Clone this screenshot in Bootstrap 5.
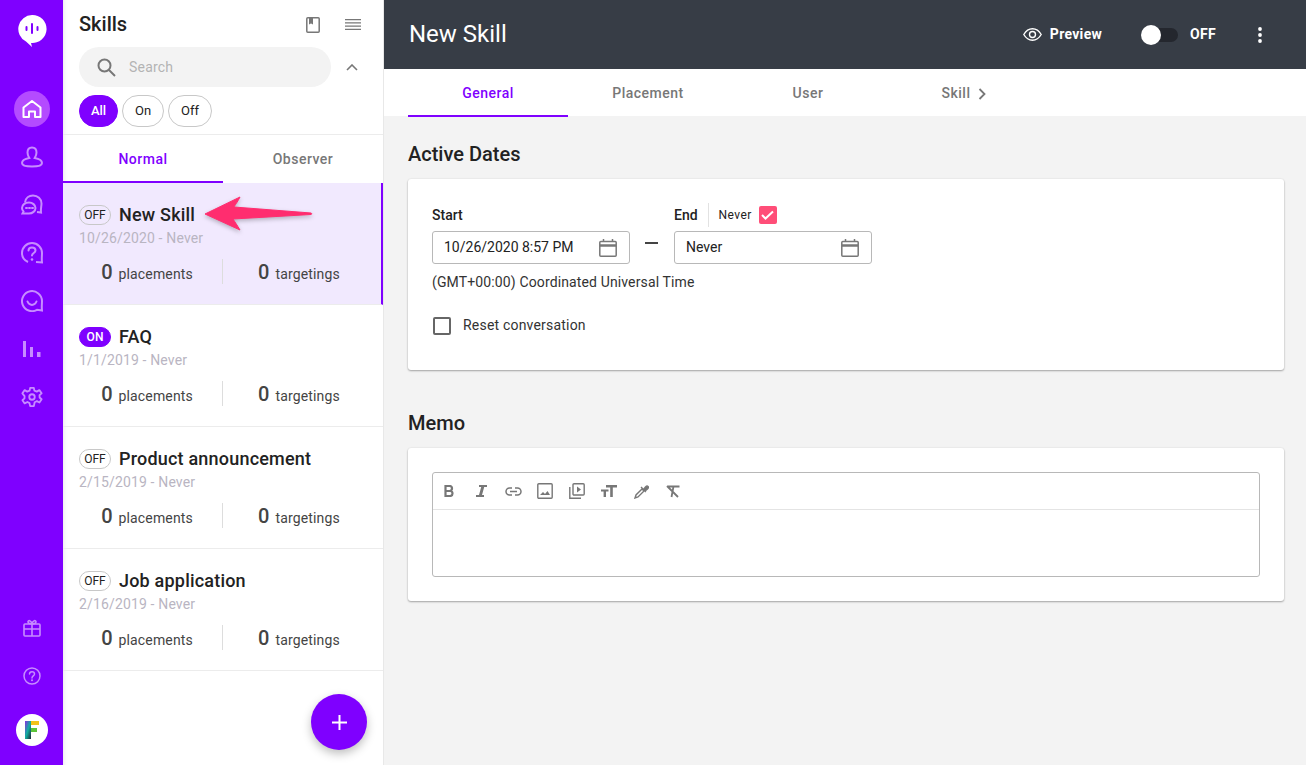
<!DOCTYPE html>
<html lang="en">
<head>
<meta charset="utf-8">
<title>Skills</title>
<link rel="stylesheet" href="https://cdn.jsdelivr.net/npm/bootstrap@5.3.0/dist/css/bootstrap.min.css">
<style>
html,body{height:100%;overflow:hidden}
body{font-family:Roboto,"Liberation Sans",sans-serif;color:#222;background:#f3f3f3;font-size:14px}
.app-shell{height:765px;width:1306px}
.rail{width:63px;background:#7f00ff;flex:none}
.rail-logo{height:32px;margin:14px 0 39px}
.rail-item{height:48px;color:#c78cff}
.rail-active{width:36px;height:36px;border-radius:50%;background:#b44bff;color:#fff}
.rail-foot{padding-bottom:19px}
.rail-avatar{width:32px;height:32px;border-radius:50%;background:#fff;margin-top:14px}
.panel{width:321px;flex:none;background:#fff;border-right:1px solid #e8e8e8;box-shadow:inset 5px 0 5px -5px rgba(0,0,0,.12)}
.panel-head{height:47px;padding:0 10px 0 16px}
.panel-title{font-size:20px;font-weight:500;line-height:54px;margin:0;color:#222}
.tool-btn{color:#777;width:40px;margin-top:3px}
.search-row{padding-left:16px;height:40px}
.search-pill{width:252px;height:40px;border-radius:20px;background:#f3f3f3;padding-left:18px;color:#b3b3b3}
.search-pill span{margin-left:13px;letter-spacing:.2px}
.chevron-up{margin-left:15px}
.chips{padding:8px 0 7px 16px;border-bottom:1px solid #ececec;gap:4px}
.chip{height:32px;border:1px solid #c8c8c8;border-radius:16px;font-size:13px;background:#fff;color:#222;line-height:30px;text-align:center}
.chip-all{width:39px}
.chip-mid{width:42px}
.chip-off{width:44px}
.chip-on{background:#7f00ff;border-color:#7f00ff;color:#fff;font-weight:500}
.tab-cell{height:48px;font-size:14px;font-weight:500;color:#777;letter-spacing:.5px;border-bottom:2px solid transparent;padding-top:3px}
.tab-on{color:#7f00ff;border-bottom-color:#7f00ff}
.tab-half{width:160px}
.skill{height:122px;border-bottom:1px solid #ececec;padding:20px 16px 0 16px}
.skill-sel{background:#f1e9fe;border-right:2px solid #7f00ff}
.state{font-size:12px;height:20px;line-height:18px;border-radius:10px;border:1px solid #c8c8c8;width:32px;text-align:center;color:#222;margin-right:8px}
.state-on{background:#7f00ff;border-color:#7f00ff;color:#fff;font-weight:500}
.skill-name{font-size:18px;font-weight:500;line-height:24px;color:#222;letter-spacing:.2px}
.skill-date{font-size:14px;color:#b9b5c2;line-height:20px;margin-top:1px;letter-spacing:.15px}
.stats{margin:11px 0 0 -16px;width:319px}
.stat{width:159px;height:25px;line-height:27px;color:#444;font-size:14px;letter-spacing:.15px;text-align:center}
.stat b{font-size:20px;font-weight:500;margin-right:6px;letter-spacing:0}
.stat-left{padding-left:9px}
.stat-right{width:160px;padding-right:7px;border-left:1px solid #ddd}
.fab{width:56px;height:56px;border-radius:50%;background:#7f00ff;color:#fff;border:0;position:absolute;right:16px;bottom:15px;box-shadow:0 4px 10px rgba(0,0,0,.25)}
.main-top{height:69px;background:#373d46;color:#fff;padding:0 44px 0 25px}
.main-title{font-size:24px;font-weight:400;margin:0;color:#fff}
.top-label{font-size:14px;font-weight:700;letter-spacing:.3px}
.label-preview{margin-right:40px}
.label-off{margin-right:42px}
.tog{width:36px;height:14px;border-radius:7px;background:#24272e;position:relative;margin-right:12px}
.tog i{position:absolute;left:-1px;top:-3px;width:20px;height:20px;border-radius:50%;background:#fff}
.main-tabs{height:47px;background:#fff;padding-left:24px}
.skill-chev{margin:0 8px 0 8px}
.main-body{padding:0 22px 0 24px}
.sec-title{font-size:20px;font-weight:500;line-height:26px;margin:25px 0 12px;color:#222}
.sec-title-gap{margin-top:40px}
.sec-card{border:0;border-radius:3px;box-shadow:0 1px 2px rgba(0,0,0,.32),0 0 2px rgba(0,0,0,.08);padding:24px}
.dates-card{height:191px}
.memo-card{height:153px}
.f-label{font-size:14px;font-weight:500;line-height:20px;color:#222}
.f-label-tall{line-height:24px}
.never-lab{font-size:12px;margin-left:10px;padding-left:10px;border-left:1px solid #e2e2e2;line-height:24px;letter-spacing:.4px}
.check-red{width:18px;height:18px;background:#ff4e78;border-radius:2px;margin-left:7px}
.date-box{width:198px;height:33px;border:1px solid #b8b8b8;border-radius:3px;padding:0 12px 0 11px;font-size:14px;color:#222;margin-top:4px}
.dash{width:13px;height:2px;background:#444;margin:39px 16px 0 15px;flex:none}
.tz{margin-top:8px;line-height:20px;color:#333;letter-spacing:.13px}
.reset-row{margin-top:23px;color:#333;letter-spacing:.2px}
.box-empty{width:18px;height:18px;border:2px solid #666;border-radius:2px;margin:0 12px 0 1px}
.editor{height:105px;border:1px solid #b8b8b8;border-radius:3px}
.ed-bar{height:37px;border-bottom:1px solid #e4e4e4;color:#777}
.ed-bar span{width:32px;text-align:center;line-height:0}
.callout{position:absolute;left:200px;top:192px;filter:drop-shadow(0 2px 2px rgba(0,0,0,.25))}
</style>
</head>
<body>
<div class="app-shell d-flex position-relative">
  <nav class="rail d-flex flex-column align-items-center">
    <div class="rail-logo">
      <svg width="30" height="34" viewBox="0 0 30 34"><path d="M15 1a14 14 0 1 1-1 27.9L15 33l-6-5.500A14 14 0 0 1 15 1z" fill="#fff"/><g stroke="#7f00ff" stroke-width="2" stroke-linecap="round"><path d="M9.500 13v3M15 10v9M20.500 13v3" /></g></svg>
    </div>
    <div class="rail-item d-flex align-items-center justify-content-center">
      <div class="rail-active d-flex align-items-center justify-content-center">
        <svg width="20" height="18" viewBox="0 0 20 18" fill="none" stroke="currentColor" stroke-width="2" stroke-linejoin="round"><path d="M1.500 7.500 10 1l8.500 6.500V17H13v-5.500H7V17H1.500z"/></svg>
      </div>
    </div>
    <div class="rail-item d-flex align-items-center justify-content-center">
      <svg width="22" height="22" viewBox="0 0 22 22" fill="none" stroke="currentColor" stroke-width="2"><path d="M11 1.500c3 0 4.500 2.300 4.500 5 0 2.500-1 4-1.800 5.500 3 .5 7.300 1.800 7.300 5 0 2-2 3.500-10 3.500S1 19 1 17c0-3.200 4.300-4.500 7.300-5-.8-1.500-1.800-3-1.800-5.500 0-2.700 1.500-5 4.500-5z"/></svg>
    </div>
    <div class="rail-item d-flex align-items-center justify-content-center">
      <svg width="22" height="22" viewBox="0 0 22 22" fill="none" stroke="currentColor" stroke-width="2"><path d="M4 8.500C4.500 4 8 1.500 12 1.500c4.700 0 8.500 3.500 8.500 8 0 3-1 5.500-.5 9l-4-.5"/><path d="M8 8.500c3.500 0 6.500 2.500 6.500 5.500S11.500 19.500 8 19.500H1.500l1-2C1.500 16.500 1 15.300 1 14c0-3 3-5.500 7-5.500z"/><path d="M5 14h1M8 14h1M11 14h1" stroke-linecap="round"/></svg>
    </div>
    <div class="rail-item d-flex align-items-center justify-content-center">
      <svg width="22" height="22" viewBox="0 0 22 22" fill="none" stroke="currentColor" stroke-width="2"><path d="M7 20C3.500 18.500 1 15 1 11 1 5.500 5.500 1 11 1s10 4.500 10 10c0 3-.5 6 0 9.500l-6-.5"/><path d="M7.500 8.500C7.500 6.500 9 5.500 11 5.500s3.500 1.200 3.500 3c0 2.500-3.500 2.500-3.500 5" stroke-linecap="round"/><circle cx="11" cy="17.500" r="1.300" fill="currentColor" stroke="none"/></svg>
    </div>
    <div class="rail-item d-flex align-items-center justify-content-center">
      <svg width="22" height="22" viewBox="0 0 22 22" fill="none" stroke="currentColor" stroke-width="2"><path d="M21 20.500l-5-.7A10 10 0 1 1 21 11c0 3-.5 6 0 9.500z"/><path d="M6.500 11.500c1 2.500 3 3.500 4.500 3.500s3.500-1 4.500-3.500" stroke-linecap="round"/></svg>
    </div>
    <div class="rail-item d-flex align-items-center justify-content-center">
      <svg width="18" height="18" viewBox="0 0 18 18" fill="currentColor"><rect x="0" y="1" width="3" height="16"/><rect x="7" y="7" width="3" height="10"/><rect x="14" y="12" width="3.500" height="5"/></svg>
    </div>
    <div class="rail-item d-flex align-items-center justify-content-center">
      <svg width="22" height="22" viewBox="0 0 24 24" fill="none" stroke="currentColor" stroke-width="2" stroke-linejoin="round"><circle cx="12" cy="12" r="3"/><path d="M10 2h4l.6 3 2.600 1.100L20 4.500 22.500 8l-2.300 2 .1 2.500 2.200 2-2.400 3.500-2.800-1.500-2.400 1.200L14 22h-4l-.7-3.300-2.300-1.200L4 19l-2.400-3.500 2.200-2 .1-2.500L1.500 8 4 4.500l2.800 1.600L9.400 5z"/></svg>
    </div>
    <div class="rail-foot mt-auto d-flex flex-column align-items-center">
      <div class="rail-item d-flex align-items-center justify-content-center">
        <svg width="18" height="18" viewBox="0 0 18 18" fill="none" stroke="currentColor" stroke-width="1.600"><rect x="1" y="5" width="16" height="12" rx="1"/><path d="M1 10h16M9 5v12M9 5C7 5 5 4.500 5 2.800S8 .8 9 5zm0 0c2 0 4-.5 4-2.200S10 .8 9 5z"/></svg>
      </div>
      <div class="rail-item d-flex align-items-center justify-content-center">
        <svg width="18" height="18" viewBox="0 0 18 18" fill="none" stroke="currentColor" stroke-width="1.500"><circle cx="9" cy="9" r="8"/><path d="M6.500 7C6.500 5.500 7.700 4.700 9 4.700s2.500.8 2.500 2.200c0 2-2.500 2-2.500 4" stroke-linecap="round"/><circle cx="9" cy="13.200" r="1" fill="currentColor" stroke="none"/></svg>
      </div>
      <div class="rail-avatar d-flex align-items-center justify-content-center">
        <svg width="14" height="18" viewBox="0 0 14 18"><defs><linearGradient id="lg" x1="0" y1="0" x2="1" y2="1"><stop offset="0" stop-color="#8a2be2"/><stop offset=".5" stop-color="#10b0a0"/><stop offset="1" stop-color="#223"/></linearGradient></defs><path d="M0 0h6v18H0z" fill="url(#lg)"/><path d="M6 0h8v4H6z" fill="#f2c21a"/><path d="M6 7h6v4H6z" fill="#5cc43a"/></svg>
      </div>
    </div>
  </nav>

  <aside class="panel d-flex flex-column position-relative">
    <div class="panel-head d-flex align-items-center">
      <h1 class="panel-title me-auto">Skills</h1>
      <span class="tool-btn d-flex justify-content-center">
        <svg width="14" height="16" viewBox="0 0 14 16" fill="none" stroke="currentColor" stroke-width="1.500"><rect x=".8" y=".8" width="12.400" height="14.400" rx="1"/><path d="M3.500 1v6l1.500-1.300L6.500 7V1" fill="currentColor" stroke-width="1"/></svg>
      </span>
      <span class="tool-btn d-flex justify-content-center">
        <svg width="16" height="12" viewBox="0 0 16 12" stroke="currentColor" stroke-width="1.200"><path d="M0 .7h16M0 3.900h16M0 7.100h16M0 10.300h16"/></svg>
      </span>
    </div>
    <div class="search-row d-flex align-items-center">
      <div class="search-pill d-flex align-items-center">
        <svg width="19" height="19" viewBox="0 0 19 19" fill="none" stroke="#777" stroke-width="2"><circle cx="7.500" cy="7.500" r="6"/><path d="M12 12l6 6"/></svg>
        <span>Search</span>
      </div>
      <svg class="chevron-up" width="12" height="7" viewBox="0 0 12 7" fill="none" stroke="#777" stroke-width="1.600"><path d="M1 6l5-5 5 5"/></svg>
    </div>
    <div class="chips d-flex">
      <span class="chip chip-all chip-on">All</span>
      <span class="chip chip-mid">On</span>
      <span class="chip chip-off">Off</span>
    </div>
    <div class="d-flex">
      <div class="tab-cell tab-half tab-on d-flex align-items-center justify-content-center">Normal</div>
      <div class="tab-cell tab-half d-flex align-items-center justify-content-center">Observer</div>
    </div>
    <div class="skill skill-sel">
      <div class="d-flex align-items-center"><span class="state">OFF</span><span class="skill-name">New Skill</span></div>
      <div class="skill-date">10/26/2020 - Never</div>
      <div class="stats d-flex"><div class="stat stat-left"><b>0</b>placements</div><div class="stat stat-right"><b>0</b>targetings</div></div>
    </div>
    <div class="skill">
      <div class="d-flex align-items-center"><span class="state state-on">ON</span><span class="skill-name">FAQ</span></div>
      <div class="skill-date">1/1/2019 - Never</div>
      <div class="stats d-flex"><div class="stat stat-left"><b>0</b>placements</div><div class="stat stat-right"><b>0</b>targetings</div></div>
    </div>
    <div class="skill">
      <div class="d-flex align-items-center"><span class="state">OFF</span><span class="skill-name">Product announcement</span></div>
      <div class="skill-date">2/15/2019 - Never</div>
      <div class="stats d-flex"><div class="stat stat-left"><b>0</b>placements</div><div class="stat stat-right"><b>0</b>targetings</div></div>
    </div>
    <div class="skill">
      <div class="d-flex align-items-center"><span class="state">OFF</span><span class="skill-name">Job application</span></div>
      <div class="skill-date">2/16/2019 - Never</div>
      <div class="stats d-flex"><div class="stat stat-left"><b>0</b>placements</div><div class="stat stat-right"><b>0</b>targetings</div></div>
    </div>
    <button class="fab d-flex align-items-center justify-content-center" aria-label="Add">
      <svg width="15" height="15" viewBox="0 0 15 15" stroke="#fff" stroke-width="2"><path d="M7.500 0v15M0 7.500h15"/></svg>
    </button>
  </aside>

  <main class="flex-grow-1 d-flex flex-column">
    <header class="main-top d-flex align-items-center">
      <h2 class="main-title me-auto">New Skill</h2>
      <svg class="me-2" width="19" height="13" viewBox="0 0 19 13" fill="none" stroke="#fff" stroke-width="1.400"><path d="M.8 6.500C3 2.700 6 .8 9.500.8s6.500 1.900 8.700 5.700c-2.200 3.800-5.200 5.700-8.700 5.700S3 10.300.8 6.500z"/><circle cx="9.500" cy="6.500" r="3"/></svg>
      <span class="top-label label-preview">Preview</span>
      <span class="tog"><i></i></span>
      <span class="top-label label-off">OFF</span>
      <svg width="4" height="16" viewBox="0 0 4 16" fill="#fff"><circle cx="2" cy="2" r="1.900"/><circle cx="2" cy="8" r="1.900"/><circle cx="2" cy="14" r="1.900"/></svg>
    </header>
    <div class="main-tabs d-flex align-items-start">
      <div class="tab-cell tab-half tab-on d-flex align-items-center justify-content-center">General</div>
      <div class="tab-cell tab-half d-flex align-items-center justify-content-center">Placement</div>
      <div class="tab-cell tab-half d-flex align-items-center justify-content-center">User</div>
      <div class="tab-cell tab-half d-flex align-items-center justify-content-center">Skill
        <svg class="skill-chev" width="8" height="12" viewBox="0 0 8 12" fill="none" stroke="#777" stroke-width="1.800"><path d="M1.500 1l5 5-5 5"/></svg>
      </div>
    </div>
    <div class="main-body">
      <h3 class="sec-title">Active Dates</h3>
      <div class="card sec-card dates-card">
        <div class="d-flex">
          <div>
            <div class="f-label f-label-tall">Start</div>
            <div class="date-box d-flex align-items-center justify-content-between">10/26/2020 8:57 PM
              <svg width="18" height="18" viewBox="0 0 18 18" fill="none" stroke="#777" stroke-width="1.500"><rect x=".8" y="2.500" width="16.400" height="14.700" rx="1"/><path d="M1 6.500h16" stroke-width="2.500"/><path d="M4.500 0v3M13.500 0v3"/></svg>
            </div>
          </div>
          <div class="dash"></div>
          <div>
            <div class="d-flex align-items-center"><span class="f-label">End</span><span class="never-lab">Never</span><span class="check-red d-flex align-items-center justify-content-center"><svg width="13" height="10" viewBox="0 0 13 10" fill="none" stroke="#fff" stroke-width="2"><path d="M1 5l3.500 3.500L12 1.500"/></svg></span></div>
            <div class="date-box d-flex align-items-center justify-content-between">Never
              <svg width="18" height="18" viewBox="0 0 18 18" fill="none" stroke="#777" stroke-width="1.500"><rect x=".8" y="2.500" width="16.400" height="14.700" rx="1"/><path d="M1 6.500h16" stroke-width="2.500"/><path d="M4.500 0v3M13.500 0v3"/></svg>
            </div>
          </div>
        </div>
        <div class="tz">(GMT+00:00) Coordinated Universal Time</div>
        <div class="reset-row d-flex align-items-center"><span class="box-empty"></span>Reset conversation</div>
      </div>
      <h3 class="sec-title sec-title-gap">Memo</h3>
      <div class="card sec-card memo-card">
        <div class="editor">
          <div class="ed-bar d-flex align-items-center">
            <span><svg width="10" height="12" viewBox="0 0 10 12" fill="none" stroke="#777" stroke-width="2.200"><path d="M1.500 1h4a2.500 2.500 0 0 1 0 5h-4zM1.500 6h4.500a2.500 2.500 0 0 1 0 5H1.500z"/></svg></span>
            <span><svg width="11" height="12" viewBox="0 0 11 12" fill="#777"><path d="M3 0h8v2H8.200L6 10h2v2H0v-2h3L5.200 2H3z"/></svg></span>
            <span><svg width="17" height="9" viewBox="0 0 17 9" fill="none" stroke="#777" stroke-width="1.500"><path d="M7 1H4.500a3.500 3.500 0 0 0 0 7H7M10 1h2.500a3.500 3.500 0 0 1 0 7H10M5 4.500h7"/></svg></span>
            <span><svg width="16" height="16" viewBox="0 0 16 16" fill="none" stroke="#777" stroke-width="1.400"><rect x=".8" y=".8" width="14.400" height="14.400" rx="1"/><path d="M3 12l3-3 2 2 2.500-3 2.500 4z" fill="#777" stroke="none"/></svg></span>
            <span><svg width="16" height="16" viewBox="0 0 16 16" fill="none" stroke="#777" stroke-width="1.400"><rect x="4" y=".8" width="11.200" height="11.200" rx="1"/><path d="M.8 4v11.200H12"/><path d="M8 3.500v6l4-3z" fill="#777" stroke="none"/></svg></span>
            <span><svg width="16" height="12" viewBox="0 0 16 12" fill="#777"><path d="M5 0h11v2.400h-4.200V12H9.200V2.400H5zM0 4.500h7.500v2H5V12H2.600V6.500H0z"/></svg></span>
            <span><svg width="15" height="15" viewBox="0 0 15 15" fill="none" stroke="#777" stroke-width="1.400"><path d="M1 14l1-3 6-6 2 2-6 6z"/><path d="M7 3l5 5M9.500 5.500l2-2.500c1-1 2-1 2.500-.5s.5 1.500-.5 2.500l-2.500 2z" fill="#777"/></svg></span>
            <span><svg width="15" height="13" viewBox="0 0 15 13" fill="none" stroke="#777" stroke-width="1.800"><path d="M1.500 1.500h12M7.500 1.500L5.500 12M1 1l11 11"/></svg></span>
          </div>
        </div>
      </div>
    </div>
  </main>

  <svg class="callout" width="115" height="42" viewBox="0 0 115 42"><path d="M5 22 40 5c-3 6-5 8-6 10l77 6c1 .5 1 1 0 1.500L33 27c2 3 4 6 7 11z" fill="#ff2d6f" stroke="#ff2d6f" stroke-linejoin="round"/></svg>
</div>
</body>
</html>
